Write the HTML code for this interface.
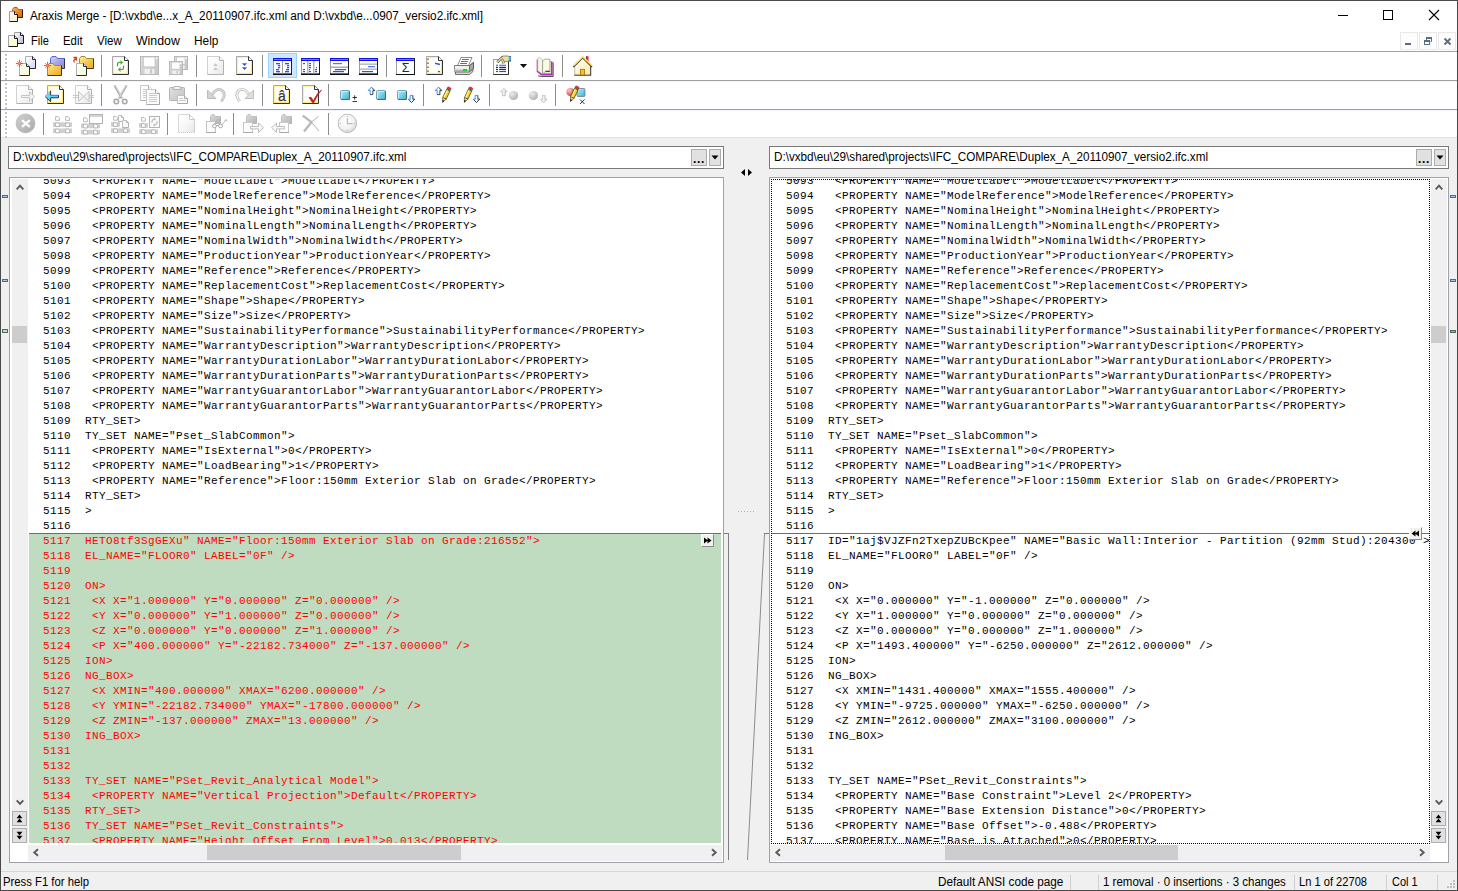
<!DOCTYPE html>
<html lang="en"><head><meta charset="utf-8"><title>Araxis Merge</title>
<style>
html,body{margin:0;padding:0;background:#fff;overflow:hidden}
#win{position:relative;width:1458px;height:891px;background:#f0f0f0;overflow:hidden;font-family:"Liberation Sans",sans-serif;font-size:12px;color:#000}
.abs{position:absolute}
.t{position:absolute;white-space:pre;font:12px/14px "Liberation Sans",sans-serif;transform-origin:0 0;color:#000}
#titlebar{position:absolute;left:0;top:0;width:1458px;height:31px;background:#fff}
#menubar{position:absolute;left:0;top:31px;width:1458px;height:20px;background:#fff}
#menubar .t{top:3px !important}
.mdib{position:absolute;top:1px;width:16px;height:16px;border:1px solid #e9e9e9;background:#fdfdfd}
#menubar svg.abs{top:1px !important}
#toolbars{position:absolute;left:0;top:0;width:1458px;height:138px}
#toolbars:before{content:"";position:absolute;left:0;top:51px;width:1458px;height:87px;background:#fff}
.tbline{position:absolute;left:0;width:1458px;height:1px;background:#a0a0a0}
.tbline2{position:absolute;left:0;width:1458px;height:1px;background:#e3e3e3}
.grip{position:absolute;left:5px;width:2px;height:26px;background-image:linear-gradient(#c6c6c6 2px,transparent 2px);background-size:2px 4px}
.ic{position:absolute}
.tsep{position:absolute;width:1px;height:21px;background:#8d8d8d}
.pathf{position:absolute;top:146px;height:21px;border:1px solid #7a7a7a;background:#fff}
.pbtn{position:absolute;top:2px;height:15px;border:1px solid #adadad;background:#e1e1e1}
.pbtn svg{display:block}
.dots{position:absolute;left:1px;top:2px;font:bold 12px/14px "Liberation Sans",sans-serif;letter-spacing:0.67px}
.mk{position:absolute;width:4px;height:1px;border:1px solid #4d6a92;background:#a9c6ea}
.mk.g{border-color:#55695a;background:#c0dcc0}
.mk.g2{border-color:#55695a;background:#8fb08f}
.pane{position:absolute;top:177px;height:684px;border:1px solid #a0a0a8;background:#fff}
.vs{position:absolute;top:1px;width:16px;height:664px;background:#f0f0f0}
.hs{position:absolute;top:667px;height:16px;background:#f0f0f0}
.thumb{position:absolute;background:#cdcdcd}
.sbtn{position:absolute;left:0;width:13px;height:13px;border:1px solid #adadad;background:#e1e1e1}
.sbtn svg{display:block}
.code{position:absolute;overflow:hidden;background:#fff}
.lines{position:absolute;left:0;top:-5px;width:1200px;font:11px/15px "Liberation Mono",monospace;letter-spacing:0.4px;color:#000}
.ln{white-space:pre;height:15px;padding-left:56px;position:relative}
.ln .no{position:absolute;left:14px}
.ln.r{color:#f00}
.greenbg{position:absolute;left:0;top:354px;width:100%;height:400px;background:#c0dcc0;border-top:1px solid #6e6e6e}
.insline{position:absolute;left:0;top:354px;width:100%;height:1px;background:#6e6e6e}
.cbtn{position:absolute;width:11px;height:11px;background:#f0f0f0;border:1px solid;border-color:#fff #8a8a8a #8a8a8a #fff}
.cbtn svg{display:block}
.focus{position:absolute;left:1px;top:1px;width:657px;height:663px;border:1px dotted #000;pointer-events:none}
#status{position:absolute;left:0;top:871px;width:1458px;height:20px;background:#f0f0f0;border-top:1px solid #d7d7d7}
.ssep{position:absolute;top:3px;width:1px;height:16px;background:#d0d0d0}
.frame{position:absolute;left:0;top:0;width:1456px;height:889px;border:1px solid #4a4a4a;pointer-events:none}
.tbl3{position:absolute;left:0;width:1458px;height:1px;background:#f1f4fa}

</style></head>
<body>
<div id="win">
<div id="titlebar">
<div class="t " style="left:30px;top:9px;transform:scaleX(0.9791);">Araxis Merge - [D:\vxbd\e...x_A_20110907.ifc.xml and D:\vxbd\e...0907_versio2.ifc.xml]</div>
<svg class="abs" style="left:1330px;top:5px" width="120" height="22" viewBox="0 0 120 22">
<path d="M8 10.5h10" stroke="#000" stroke-width="1" fill="none"/>
<rect x="53.5" y="5.5" width="9" height="9" stroke="#000" stroke-width="1" fill="none"/>
<path d="M99 5l10 10M109 5l-10 10" stroke="#000" stroke-width="1.1" fill="none"/>
</svg>
</div>
<div id="menubar">
<div class="t " style="left:31px;top:34px;transform:scaleX(0.9202);">File</div>
<div class="t " style="left:63px;top:34px;transform:scaleX(0.9474);">Edit</div>
<div class="t " style="left:97px;top:34px;transform:scaleX(0.9614);">View</div>
<div class="t " style="left:136px;top:34px;transform:scaleX(1.0261);">Window</div>
<div class="t " style="left:194px;top:34px;transform:scaleX(0.9884);">Help</div>
<div class="mdib" style="left:1400px"></div><div class="mdib" style="left:1419px"></div><div class="mdib" style="left:1438px"></div>
<svg class="abs" style="left:1400px;top:32px" width="56" height="18" viewBox="0 0 56 18">
<rect x="5" y="11" width="6" height="2" fill="#5b6c83"/>
<path d="M26.5 8.5V5.5h5v4h-1" stroke="#5b6c83" fill="none"/><rect x="26" y="5" width="6" height="2" fill="#5b6c83"/>
<rect x="24.5" y="8.500" width="5" height="4" stroke="#5b6c83" fill="#fff"/><rect x="24" y="8" width="6" height="2" fill="#5b6c83"/>
<path d="M44.500 6.500l6 6M50.500 6.500l-6 6" stroke="#5b6c83" stroke-width="1.800" fill="none"/>
</svg>
</div>
<svg class="abs" style="left:0;top:0" width="30" height="51" viewBox="0 0 30 51"><defs>
<linearGradient id="gfo" x1="0" y1="0" x2="1" y2="1"><stop offset="0" stop-color="#f8b060"/><stop offset="0.5" stop-color="#f08820"/><stop offset="1" stop-color="#d06808"/></linearGradient>
<linearGradient id="gdoc3" x1="0" y1="0" x2="0" y2="1"><stop offset="0" stop-color="#f8f8f8"/><stop offset="1" stop-color="#fff0c8"/></linearGradient>
<linearGradient id="gdoc1b" x1="0" y1="0" x2="1" y2="1"><stop offset="0" stop-color="#ffffff"/><stop offset="1" stop-color="#b8b8d8"/></linearGradient>
<linearGradient id="gdoc2b" x1="0" y1="0" x2="0" y2="1"><stop offset="0" stop-color="#f8f8f8"/><stop offset="1" stop-color="#ffffc0"/></linearGradient>
</defs><path d="M12.5 17.5V9.5L14 7.5H17L18.5 9.5H22.5V17.5Z" fill="url(#gfo)"/><path d="M12.5 17.5V9.5L14 7.5H17L18.5 9.5H22.5" fill="none" stroke="#b06010"/><path d="M12.5 17.5H22.5V9.5" fill="none" stroke="#301808"/><path d="M9.5 11.5H14.5L17.5 14.5V21.5H9.5Z" fill="url(#gdoc3)"/><path d="M9.5 21.5V11.5H14.5" fill="none" stroke="#a0a0a0"/><path d="M9.5 21.5H17.5V14.5L14.5 11.5" fill="none" stroke="#181818"/><path d="M14.5 11.5V14.5H17.5" fill="#fff" stroke="#181818"/><path d="M14.5 32.5H20.5L23.5 35.5V43.5H14.5Z" fill="url(#gdoc1b)"/><path d="M14.5 43.5V32.5H20.5" fill="none" stroke="#a0a0a0"/><path d="M14.5 43.5H23.5V35.5L20.5 32.5" fill="none" stroke="#181818"/><path d="M20.5 32.5V35.5H23.5" fill="#fff" stroke="#181818"/><path d="M8.5 35.5H14.5L17.5 38.5V46.5H8.5Z" fill="url(#gdoc2b)"/><path d="M8.5 46.5V35.5H14.5" fill="none" stroke="#a0a0a0"/><path d="M8.5 46.5H17.5V38.5L14.5 35.5" fill="none" stroke="#181818"/><path d="M14.5 35.5V38.5H17.5" fill="#fff" stroke="#181818"/></svg>
<div id="toolbars">
<div class="tbline" style="top:51px"></div><div class="tbline" style="top:80px"></div><div class="tbline" style="top:109px"></div><div class="tbline2" style="top:137px"></div>
<div class="tbl3" style="top:81px"></div><div class="tbl3" style="top:110px"></div>
<div class="grip" style="top:54px"></div>
<div class="grip" style="top:83px"></div>
<div class="grip" style="top:112px"></div>
<svg class="abs" style="left:0;top:51px" width="620" height="87" viewBox="0 51 620 87"><defs>
<radialGradient id="gy" cx="0.45" cy="0.4" r="0.75"><stop offset="0" stop-color="#ffffff"/><stop offset="0.6" stop-color="#fffef6"/><stop offset="0.85" stop-color="#fff6c0"/><stop offset="1" stop-color="#ffe870"/></radialGradient>
<linearGradient id="gd" x1="0" y1="0" x2="1" y2="1"><stop offset="0" stop-color="#ffffff"/><stop offset="0.5" stop-color="#f8f8f8"/><stop offset="1" stop-color="#e6e6e6"/></linearGradient>
<linearGradient id="gdoc1" x1="0" y1="0" x2="1" y2="1"><stop offset="0" stop-color="#ffffff"/><stop offset="1" stop-color="#d4d4f4"/></linearGradient>
<linearGradient id="gdoc2" x1="0" y1="0" x2="1" y2="1"><stop offset="0" stop-color="#ffffff"/><stop offset="1" stop-color="#f4fbc8"/></linearGradient>
<linearGradient id="gfy" x1="0" y1="0" x2="1" y2="1"><stop offset="0" stop-color="#fff0a8"/><stop offset="0.5" stop-color="#f8c850"/><stop offset="1" stop-color="#e8a828"/></linearGradient>
<linearGradient id="gfb" x1="0" y1="0" x2="1" y2="1"><stop offset="0" stop-color="#d8d4f8"/><stop offset="0.5" stop-color="#a8a4e4"/><stop offset="1" stop-color="#7c8cd8"/></linearGradient>
<linearGradient id="gfg" x1="0" y1="0" x2="1" y2="1"><stop offset="0" stop-color="#dcdcdc"/><stop offset="1" stop-color="#b4b4b4"/></linearGradient>
<linearGradient id="gsq" x1="0" y1="0" x2="1" y2="1"><stop offset="0" stop-color="#b8f0fc"/><stop offset="0.5" stop-color="#78d0e8"/><stop offset="1" stop-color="#48a8c8"/></linearGradient>
<radialGradient id="gball" cx="0.35" cy="0.3" r="0.8"><stop offset="0" stop-color="#ececec"/><stop offset="1" stop-color="#acacac"/></radialGradient>
<radialGradient id="grball" cx="0.35" cy="0.3" r="0.8"><stop offset="0" stop-color="#ffc8c8"/><stop offset="1" stop-color="#d83030"/></radialGradient>
<radialGradient id="gclock" cx="0.4" cy="0.35" r="0.8"><stop offset="0" stop-color="#ffffff"/><stop offset="0.55" stop-color="#f2f2f2"/><stop offset="1" stop-color="#c6c6c6"/></radialGradient>
<linearGradient id="gfl" x1="0" y1="0" x2="1" y2="1"><stop offset="0" stop-color="#e0e0e0"/><stop offset="1" stop-color="#c4c4c4"/></linearGradient>
<linearGradient id="gar" x1="0" y1="0" x2="0" y2="1"><stop offset="0" stop-color="#c0f0ff"/><stop offset="1" stop-color="#38b8f8"/></linearGradient>
<linearGradient id="ghome" x1="0" y1="0" x2="1" y2="1"><stop offset="0" stop-color="#ffffff"/><stop offset="1" stop-color="#ffe9a0"/></linearGradient>
<linearGradient id="gar2" x1="0" y1="0" x2="0" y2="1"><stop offset="0" stop-color="#c0f0ff"/><stop offset="1" stop-color="#50c0ff"/></linearGradient>
<linearGradient id="gcx" x1="0" y1="0" x2="1" y2="1"><stop offset="0" stop-color="#d0d0d0"/><stop offset="1" stop-color="#aaaaaa"/></linearGradient>
<linearGradient id="gar3" x1="0" y1="0" x2="1" y2="0.5"><stop offset="0" stop-color="#e8fbff"/><stop offset="0.35" stop-color="#58d8ff"/><stop offset="1" stop-color="#58d0ff"/></linearGradient>
<linearGradient id="gar4" x1="0" y1="0" x2="1" y2="0"><stop offset="0" stop-color="#50c8ff"/><stop offset="0.5" stop-color="#e8fcff"/><stop offset="1" stop-color="#60d8ff"/></linearGradient>
</defs>
<path d="M25.5 56.5H32.5L35.5 59.5V68.5H25.5Z" fill="url(#gdoc1)"/><path d="M25.5 68.5V56.5H32.5" fill="none" stroke="#b0b0b0"/><path d="M25.5 68.5H35.5V59.5L32.5 56.5" fill="none" stroke="#282828"/><path d="M32.5 56.5V59.5H35.5" fill="#fff" stroke="#282828"/>
<path d="M19.5 63.5H26.5L29.5 66.5V75.5H19.5Z" fill="url(#gdoc2)"/><path d="M19.5 75.5V63.5H26.5" fill="none" stroke="#b0b0b0"/><path d="M19.5 75.5H29.5V66.5L26.5 63.5" fill="none" stroke="#282828"/><path d="M26.5 63.5V66.5H29.5" fill="#fff" stroke="#282828"/>
<path d="M21.1 63.5L23.1 63.5" stroke="#e85028" stroke-width="1"/><path d="M20.63 64.63L21.62 65.62" stroke="#e85028" stroke-width="1"/><path d="M19.5 65.1L19.5 67.1" stroke="#e85028" stroke-width="1"/><path d="M18.37 64.63L17.38 65.62" stroke="#e85028" stroke-width="1"/><path d="M17.9 63.5L15.9 63.5" stroke="#e85028" stroke-width="1"/><path d="M18.37 62.37L17.38 61.38" stroke="#e85028" stroke-width="1"/><path d="M19.5 61.9L19.5 59.9" stroke="#e85028" stroke-width="1"/><path d="M20.63 62.37L21.62 61.38" stroke="#e85028" stroke-width="1"/><circle cx="19.5" cy="63.5" r="1.3" fill="#c8a090" stroke="#e85028" stroke-width="0.8"/>
<path d="M50.5 68.5V58.5L52 56.5H56L57.5 58.5H64.5V68.5Z" fill="url(#gfb)"/><path d="M50.5 68.5V58.5L52 56.5H56L57.5 58.5H64.5" fill="none" stroke="#5068d0"/><path d="M50.5 68.5H64.5V58.5" fill="none" stroke="#303048"/>
<path d="M47.5 75.5V65.5L49 63.5H53L54.5 65.5H61.5V75.5Z" fill="url(#gfy)"/><path d="M47.5 75.5V65.5L49 63.5H53L54.5 65.5H61.5" fill="none" stroke="#a09030"/><path d="M47.5 75.5H61.5V65.5" fill="none" stroke="#403810"/>
<path d="M49.1 65.5L51.1 65.5" stroke="#e85028" stroke-width="1"/><path d="M48.63 66.63L49.62 67.62" stroke="#e85028" stroke-width="1"/><path d="M47.5 67.1L47.5 69.1" stroke="#e85028" stroke-width="1"/><path d="M46.37 66.63L45.38 67.62" stroke="#e85028" stroke-width="1"/><path d="M45.9 65.5L43.9 65.5" stroke="#e85028" stroke-width="1"/><path d="M46.37 64.37L45.38 63.38" stroke="#e85028" stroke-width="1"/><path d="M47.5 63.9L47.5 61.9" stroke="#e85028" stroke-width="1"/><path d="M48.63 64.37L49.62 63.38" stroke="#e85028" stroke-width="1"/><circle cx="47.5" cy="65.5" r="1.3" fill="#c8a090" stroke="#e85028" stroke-width="0.8"/>
<path d="M79.5 68.5V58.5L81 56.5H85L86.5 58.5H93.5V68.5Z" fill="url(#gfy)"/><path d="M79.5 68.5V58.5L81 56.5H85L86.5 58.5H93.5" fill="none" stroke="#a09030"/><path d="M79.5 68.5H93.5V58.5" fill="none" stroke="#403810"/>
<path d="M76.5 63.5H83.5L86.5 66.5V75.5H76.5Z" fill="url(#gdoc2)"/><path d="M76.5 75.5V63.5H83.5" fill="none" stroke="#b0b0b0"/><path d="M76.5 75.5H86.5V66.5L83.5 63.5" fill="none" stroke="#282828"/><path d="M83.5 63.5V66.5H86.5" fill="#fff" stroke="#282828"/>
<path d="M73.300 57.500h3.200v3.200M76.300 57.700l-3 3.200M73.800 61.200l0.700 1.200" stroke="#e04020" stroke-width="1.300" fill="none"/>
<rect x="101" y="55" width="1" height="22" fill="#8c8c8c"/>
<path d="M112.5 56.5H124.5L128.5 60.5V74.5H112.5Z" fill="url(#gy)"/><path d="M113.5 73.5V57.5H124" fill="none" stroke="#fff2a4" stroke-width="1"/><path d="M113.5 73.5H127.5V61.5" fill="none" stroke="#ffe978" stroke-width="1"/><path d="M112.5 74.5V56.5H124.5" fill="none" stroke="#a8a8a8"/><path d="M112.5 74.5H128.5V60.5L124.5 56.5" fill="none" stroke="#303038"/><path d="M124.5 56.5V60.5H128.5" fill="#fff" stroke="#303038"/>
<path d="M117.500 66.200v-2.200q0-1.500 1.500-1.500h2.500" fill="none" stroke="#208c94" stroke-width="1.100"/>
<path d="M118.800 62.400h3" stroke="#48b020" stroke-width="1.200"/><path d="M120.200 60l3 2.400-3 2.400 0.600-2.400z" fill="#48b020"/>
<path d="M123.500 65.800v2.200q0 1.500-1.500 1.500h-2.500" fill="none" stroke="#208c94" stroke-width="1.100"/>
<path d="M122.200 69.500h-3" stroke="#48b020" stroke-width="1.200"/><path d="M120.800 67.100l-3 2.400 3 2.400-0.600-2.400z" fill="#48b020"/>
<rect x="140.5" y="56.5" width="18" height="18" fill="url(#gfl)" stroke="#b8b8b8"/><rect x="143.31" y="57" width="11.78" height="9.88" fill="#fdfdfd" stroke="#c0c0c0" stroke-width="0.8"/><rect x="144.56" y="68.92" width="9.88" height="5.08" fill="#f0f0f0"/><rect x="149.99" y="69.3" width="2.17" height="4.2" fill="#c8c8c8"/><rect x="156" y="57.5" width="1.5" height="1.5" fill="#fff"/>
<rect x="174.5" y="56.5" width="13" height="13" fill="url(#gfl)" stroke="#b8b8b8"/><rect x="176.36" y="57" width="8.68" height="7.28" fill="#fdfdfd" stroke="#c0c0c0" stroke-width="0.8"/><rect x="177.36" y="65.52" width="7.28" height="3.48" fill="#f0f0f0"/><rect x="181.36" y="65.8" width="1.6" height="2.7" fill="#c8c8c8"/><rect x="185" y="57.5" width="1.5" height="1.5" fill="#fff"/>
<rect x="169.5" y="61.5" width="13" height="13" fill="url(#gfl)" stroke="#b8b8b8"/><rect x="171.36" y="62" width="8.68" height="7.28" fill="#fdfdfd" stroke="#c0c0c0" stroke-width="0.8"/><rect x="172.36" y="70.52" width="7.28" height="3.48" fill="#f0f0f0"/><rect x="176.36" y="70.8" width="1.6" height="2.7" fill="#c8c8c8"/><rect x="180" y="62.5" width="1.5" height="1.5" fill="#fff"/>
<rect x="196" y="55" width="1" height="22" fill="#8c8c8c"/>
<path d="M207.5 56.5H219.5L223.5 60.5V74.5H207.5Z" fill="url(#gd)"/><path d="M207.5 74.5V56.5H219.5" fill="none" stroke="#d0d0d0"/><path d="M207.5 74.5H223.5V60.5L219.5 56.5" fill="none" stroke="#b0b0b0"/><path d="M219.5 56.5V60.5H223.5" fill="#fafafa" stroke="#b0b0b0"/>
<path d="M215.500 63.200l2.500 2.700h-5zM215.500 67.300l2.500 2.700h-5z" fill="#c8c8c8"/>
<path d="M236.5 56.5H248.5L252.5 60.5V74.5H236.5Z" fill="url(#gy)"/><path d="M237.5 73.5V57.5H248" fill="none" stroke="#fff2a4" stroke-width="1"/><path d="M237.5 73.5H251.5V61.5" fill="none" stroke="#ffe978" stroke-width="1"/><path d="M236.5 74.5V56.5H248.5" fill="none" stroke="#a8a8a8"/><path d="M236.5 74.5H252.5V60.5L248.5 56.5" fill="none" stroke="#303038"/><path d="M248.5 56.5V60.5H252.5" fill="#fff" stroke="#303038"/>
<path d="M242 63.200h5l-2.500 2.700zM242 67.300h5l-2.500 2.700z" fill="#3050e0"/><path d="M242 63.500h5M242 67.600h5" stroke="#7090ff" stroke-width="0.7"/>
<rect x="262" y="55" width="1" height="22" fill="#8c8c8c"/>
<rect x="268.500" y="53.500" width="28" height="24" fill="#cce8ff" stroke="#99d1ff"/>
<rect x="273" y="58" width="19" height="17" fill="#fff"/><rect x="273" y="58" width="19" height="3" fill="#1010e8"/><rect x="274" y="59" width="17" height="1" fill="#6c8cf8"/><rect x="273" y="61" width="1" height="14" fill="#9c9c9c"/><rect x="291" y="58" width="1" height="17" fill="#202020"/><rect x="273" y="73.4" width="19" height="1.6" fill="#101010"/>
<rect x="282" y="61" width="1" height="12.500" fill="#9c9c9c"/>
<rect x="276" y="63.1" width="4" height="1.2" fill="#1c3cf0"/>
<rect x="278" y="65.1" width="2.2" height="1.2" fill="#1c3cf0"/>
<rect x="278" y="67.1" width="2.2" height="1.2" fill="#1c3cf0"/>
<rect x="276" y="69.1" width="3" height="1.2" fill="#1c3cf0"/>
<rect x="276" y="71.1" width="4" height="1.2" fill="#1c3cf0"/>
<rect x="285" y="63.1" width="4" height="1.2" fill="#1c3cf0"/>
<rect x="287" y="65.1" width="2.2" height="1.2" fill="#1c3cf0"/>
<rect x="287" y="67.1" width="2.2" height="1.2" fill="#1c3cf0"/>
<rect x="286" y="69.1" width="3" height="1.2" fill="#1c3cf0"/>
<rect x="285" y="71.1" width="4" height="1.2" fill="#1c3cf0"/>
<rect x="301" y="58" width="19" height="17" fill="#fff"/><rect x="301" y="58" width="19" height="3" fill="#1010e8"/><rect x="302" y="59" width="17" height="1" fill="#6c8cf8"/><rect x="301" y="61" width="1" height="14" fill="#9c9c9c"/><rect x="319" y="58" width="1" height="17" fill="#202020"/><rect x="301" y="73.4" width="19" height="1.6" fill="#101010"/>
<rect x="307" y="61" width="1.500" height="12.500" fill="#b4b4b4"/><rect x="313" y="61" width="1.500" height="12.500" fill="#b4b4b4"/>
<rect x="303" y="63" width="2" height="1.2" fill="#3050f0"/>
<rect x="303" y="69" width="2" height="1.2" fill="#3050f0"/>
<rect x="303" y="71" width="2" height="1.2" fill="#3050f0"/>
<rect x="309" y="63" width="2" height="1.2" fill="#3050f0"/>
<rect x="309" y="65" width="2" height="1.2" fill="#3050f0"/>
<rect x="309" y="67" width="2" height="1.2" fill="#3050f0"/>
<rect x="309" y="69" width="1" height="1.2" fill="#3050f0"/>
<rect x="309" y="71" width="2" height="1.2" fill="#3050f0"/>
<rect x="316" y="67" width="1" height="1.2" fill="#3050f0"/>
<rect x="315" y="69" width="2" height="1.2" fill="#3050f0"/>
<rect x="315" y="71" width="2" height="1.2" fill="#3050f0"/>
<rect x="330" y="58" width="19" height="17" fill="#fff"/><rect x="330" y="58" width="19" height="3" fill="#1010e8"/><rect x="331" y="59" width="17" height="1" fill="#6c8cf8"/><rect x="330" y="61" width="1" height="14" fill="#9c9c9c"/><rect x="348" y="58" width="1" height="17" fill="#202020"/><rect x="330" y="73.4" width="19" height="1.6" fill="#101010"/>
<rect x="331" y="66.500" width="17" height="1.500" fill="#a8a8a8"/>
<rect x="333" y="63" width="9" height="1.2" fill="#5078f0"/>
<rect x="335" y="69" width="11" height="1.2" fill="#3050e0"/>
<rect x="333" y="71" width="11" height="1.2" fill="#3050e0"/>
<rect x="359" y="58" width="19" height="17" fill="#fff"/><rect x="359" y="58" width="19" height="3" fill="#1010e8"/><rect x="360" y="59" width="17" height="1" fill="#6c8cf8"/><rect x="359" y="61" width="1" height="14" fill="#9c9c9c"/><rect x="377" y="58" width="1" height="17" fill="#202020"/><rect x="359" y="73.4" width="19" height="1.6" fill="#101010"/>
<rect x="360" y="63.500" width="17" height="1.300" fill="#b0b0b0"/><rect x="360" y="68.500" width="17" height="1.300" fill="#b0b0b0"/>
<rect x="368" y="66" width="7" height="1.2" fill="#5078f0"/>
<rect x="362" y="71" width="11" height="1.2" fill="#3050e0"/>
<rect x="386" y="55" width="1" height="22" fill="#8c8c8c"/>
<rect x="396" y="58" width="19" height="17" fill="#fff"/><rect x="396" y="58" width="19" height="3" fill="#1010e8"/><rect x="397" y="59" width="17" height="1" fill="#6c8cf8"/><rect x="396" y="61" width="1" height="14" fill="#9c9c9c"/><rect x="414" y="58" width="1" height="17" fill="#202020"/><rect x="396" y="74" width="19" height="1" fill="#101010"/>
<text x="405.500" y="72.300" font-family="Liberation Sans, sans-serif" font-size="12.500" text-anchor="middle" fill="#282828">Σ</text>
<path d="M426.5 56.5H438.5L442.5 60.5V74.5H426.5Z" fill="url(#gy)"/><path d="M427.5 73.5V57.5H438" fill="none" stroke="#fff2a4" stroke-width="1"/><path d="M427.5 73.5H441.5V61.5" fill="none" stroke="#ffe978" stroke-width="1"/><path d="M426.5 74.5V56.5H438.5" fill="none" stroke="#a8a8a8"/><path d="M426.5 74.5H442.5V60.5L438.5 56.5" fill="none" stroke="#303038"/><path d="M438.5 56.5V60.5H442.5" fill="#fff" stroke="#303038"/>
<rect x="427" y="58.5" width="2" height="1.500" fill="#c88818"/>
<rect x="427" y="62.5" width="2" height="1.500" fill="#c88818"/>
<rect x="427" y="66.5" width="2" height="1.500" fill="#c88818"/>
<rect x="427" y="70.5" width="2" height="1.500" fill="#c88818"/>
<path d="M435 63.300l5 1.200" stroke="#3858e8" stroke-width="1.600"/><rect x="438" y="71" width="2" height="1.200" fill="#3858e8"/>
<path d="M457.500 65.500l3.500-8h11l-3.500 8z" fill="#fff" stroke="#707070" stroke-width="0.8"/>
<path d="M462 59.500h7M461 61.500h7M460 63.500h7" stroke="#4070e8" stroke-width="1"/>
<path d="M454.500 65.500h15l4-3v6l-4 3.500h-15z" fill="#f0f0f0" stroke="#606060" stroke-width="0.8"/>
<path d="M469.500 65.500l4-3v6l-4 3.500z" fill="#a8a8a8" stroke="#505050" stroke-width="0.8"/>
<path d="M455.500 72h14l3.500-3v2.500l-3.500 3h-14z" fill="#d8d8d8" stroke="#505050" stroke-width="0.8"/>
<rect x="454" y="69.500" width="15.500" height="2" fill="#b8b8b8"/>
<rect x="463" y="69" width="4" height="2" fill="#20d020"/>
<rect x="481" y="55" width="1" height="22" fill="#8c8c8c"/>
<rect x="493.500" y="59.500" width="15" height="15" fill="#fffff4" stroke="#a0a0a0"/><path d="M493.500 74.500h15v-15" fill="none" stroke="#303030"/>
<rect x="496" y="64.7" width="2" height="1.200" fill="#4878f8"/><rect x="499.200" y="64.7" width="6.800" height="1.200" fill="#4878f8"/>
<rect x="496" y="66.8" width="2" height="1.200" fill="#1818f0"/><rect x="499.200" y="66.8" width="6.800" height="1.200" fill="#1818f0"/>
<rect x="496" y="68.8" width="2" height="1.200" fill="#1818f0"/><rect x="499.200" y="68.8" width="6.800" height="1.200" fill="#1818f0"/>
<rect x="496" y="70.9" width="2" height="1.200" fill="#2050b0"/><rect x="499.200" y="70.9" width="6.800" height="1.200" fill="#2050b0"/>
<path d="M497.300 62.300l4.400-4.600 2 5.600" fill="none" stroke="#504c20" stroke-width="2.400" stroke-linejoin="miter"/>
<path d="M497.300 62.300l4.400-4.600 2 5.600" fill="none" stroke="#f0ecc0" stroke-width="1.200" stroke-linejoin="miter"/>
<path d="M501.500 57.500l1.500-1.500h5.500l0.800 1v4l-4.500 0.800z" fill="#e4e0b4" stroke="#807840" stroke-width="0.8"/>
<rect x="509.200" y="56" width="1.800" height="5.200" fill="#30b0ff"/><rect x="509.200" y="56" width="1.800" height="1" fill="#4060f0"/><rect x="509.200" y="60.400" width="1.800" height="1" fill="#303060"/>
<path d="M519.900 64h7.200l-3.600 4z" fill="#101010"/>
<path d="M538.200 75.900l3.200 0.500h11.700v-14" fill="none" stroke="#282828" stroke-width="0.9"/>
<path d="M536.700 59.500v12.300l4.500 3.700h11.300v-14h-2.500z" fill="#b428b4"/>
<path d="M538 60v11l3.700 2.600h9.300v-11.600z" fill="#ececdc"/>
<path d="M537.700 58.500l1.800-1.300 3 3v13.900l-4.800-3.400z" fill="#f8f8e0" stroke="#a8a8a8" stroke-width="0.7"/>
<path d="M542.600 60.500l2.800-1.300h4.500v12.200h-4.500l-2.800 2.600z" fill="#fbfbe4" stroke="#888" stroke-width="0.7"/>
<path d="M545.500 71.300h4.300" stroke="#303030" stroke-width="1.100"/>
<rect x="562" y="55" width="1" height="22" fill="#8c8c8c"/>
<rect x="586.200" y="56.200" width="2.400" height="6" fill="#f02860"/><rect x="586" y="56.200" width="0.800" height="5" fill="#802040"/>
<path d="M574.700 66.300l8-7.800 8 7.800v8.900h-16z" fill="url(#ghome)"/>
<path d="M574.700 66.300v8.900" stroke="#b8b090" stroke-width="0.8"/><path d="M574.300 75.200h16.800M590.700 66.300v9" fill="none" stroke="#303030" stroke-width="1"/>
<path d="M573.400 66.900l9.300-9.100 9.300 9.100" fill="none" stroke="#303030" stroke-width="1.400"/>
<path d="M573.400 65.700l9.300-9.100 9.300 9.100" fill="none" stroke="#ffe040" stroke-width="1.700"/>
<path d="M574 65l8.700-8.500" fill="none" stroke="#fff8c0" stroke-width="0.600"/>
<rect x="580.500" y="69.300" width="4" height="5.700" fill="#f8c020" stroke="#a07010" stroke-width="0.8"/>
<path d="M16.5 85.5H28.5L32.5 89.5V103.5H16.5Z" fill="url(#gd)"/><path d="M16.5 103.5V85.5H28.5" fill="none" stroke="#d0d0d0"/><path d="M16.5 103.5H32.5V89.5L28.5 85.5" fill="none" stroke="#b0b0b0"/><path d="M28.5 85.5V89.5H32.5" fill="#fafafa" stroke="#b0b0b0"/>
<path d="M21.500 95.500h8v-3.500l5 4.500-5 4.500v-3.500h-8z" fill="#f4f4f4" stroke="#c0c0c0" stroke-width="0.9"/>
<path d="M47.5 85.5H59.5L63.5 89.5V103.5H47.5Z" fill="url(#gy)"/><path d="M48.5 102.5V86.5H59" fill="none" stroke="#fff2a4" stroke-width="1"/><path d="M48.5 102.5H62.5V90.5" fill="none" stroke="#ffe978" stroke-width="1"/><path d="M47.5 103.5V85.5H59.5" fill="none" stroke="#a8a8a8"/><path d="M47.5 103.5H63.5V89.5L59.5 85.5" fill="none" stroke="#303038"/><path d="M59.5 85.5V89.5H63.5" fill="#fff" stroke="#303038"/>
<path d="M45 96.400L50.600 91V95.300H58.600V97.700H50.600V101.600Z" fill="url(#gar3)"/>
<path d="M45 96.400L50.600 91" stroke="#4070ff" stroke-width="0.9" stroke-dasharray="1.100 0.700" fill="none"/><path d="M50.600 95.300H58.400" stroke="#4060f0" stroke-width="0.9" fill="none"/>
<path d="M45.400 96.900L50.600 101.600V97.800H58.500V95.200M50.600 90.800V95.300" stroke="#202020" stroke-width="0.9" fill="none"/>
<path d="M75.5 85.5H87.5L91.5 89.5V103.5H75.5Z" fill="url(#gd)"/><path d="M75.5 103.5V85.5H87.5" fill="none" stroke="#d0d0d0"/><path d="M75.5 103.5H91.5V89.5L87.5 85.5" fill="none" stroke="#b0b0b0"/><path d="M87.5 85.5V89.5H91.5" fill="#fafafa" stroke="#b0b0b0"/>
<path d="M73 95.500h5M89 95.500h5M73 97.500h5M89 97.500h5" stroke="#c8c8c8" stroke-width="1"/><path d="M78.500 91.500l10.500 10v-10l-10.500 10z" fill="#f0f0f0" stroke="#c0c0c0" stroke-width="0.9"/>
<rect x="101" y="84" width="1" height="22" fill="#8c8c8c"/>
<path d="M114.500 85.500l7.500 13M126.500 85.500l-7.500 13" stroke="#a8a8a8" stroke-width="2.100" fill="none"/><path d="M115 85.500l7 12.500M126 85.500l-7 12.500" stroke="#f0f0f0" stroke-width="0.600" fill="none"/>
<circle cx="116.300" cy="101.500" r="2.300" fill="#f4f4f4" stroke="#a8a8a8" stroke-width="1.500"/><circle cx="124.700" cy="101.500" r="2.300" fill="#f4f4f4" stroke="#a8a8a8" stroke-width="1.500"/>
<path d="M140.5 85.5H148.5L152.5 89.5V100.5H140.5Z" fill="#fcfcfc"/><path d="M140.5 100.5V85.5H148.5" fill="none" stroke="#c8c8c8"/><path d="M140.5 100.5H152.5V89.5L148.5 85.5" fill="none" stroke="#b0b0b0"/><path d="M148.5 85.5V89.5H152.5" fill="#fff" stroke="#b0b0b0"/>
<path d="M143 89.5h4" stroke="#c8c8c8" stroke-width="0.9"/>
<path d="M143 91.5h4" stroke="#c8c8c8" stroke-width="0.9"/>
<path d="M143 93.5h4" stroke="#c8c8c8" stroke-width="0.9"/>
<path d="M143 95.5h4" stroke="#c8c8c8" stroke-width="0.9"/>
<path d="M143 97.5h4" stroke="#c8c8c8" stroke-width="0.9"/>
<path d="M146.5 89.5H155.5L159.5 93.5V104.5H146.5Z" fill="#fcfcfc"/><path d="M146.5 104.5V89.5H155.5" fill="none" stroke="#c8c8c8"/><path d="M146.5 104.5H159.5V93.5L155.5 89.5" fill="none" stroke="#a8a8a8"/><path d="M155.5 89.5V93.5H159.5" fill="#fff" stroke="#a8a8a8"/>
<path d="M149 93.5h8" stroke="#c4c4c4" stroke-width="0.9"/>
<path d="M149 95.5h8" stroke="#c4c4c4" stroke-width="0.9"/>
<path d="M149 97.5h8" stroke="#c4c4c4" stroke-width="0.9"/>
<path d="M149 99.5h8" stroke="#c4c4c4" stroke-width="0.9"/>
<path d="M149 101.5h8" stroke="#c4c4c4" stroke-width="0.9"/>
<rect x="169.500" y="87.500" width="15" height="13" rx="1" fill="url(#gfl)" stroke="#b4b4b4"/>
<path d="M172.500 89.500l1.500-3h6l1.500 3z" fill="#e8e8e8" stroke="#b0b0b0" stroke-width="0.9"/><rect x="175.500" y="87.400" width="3" height="1" fill="#fff"/>
<path d="M177.5 95.5H184.5L187.5 98.5V103.5H177.5Z" fill="#fcfcfc"/><path d="M177.5 103.5V95.5H184.5" fill="none" stroke="#c0c0c0"/><path d="M177.5 103.5H187.5V98.5L184.5 95.5" fill="none" stroke="#a8a8a8"/><path d="M184.5 95.5V98.5H187.5" fill="#fff" stroke="#a8a8a8"/>
<path d="M179 98.500h4M179 100.500h7" stroke="#c4c4c4" stroke-width="0.9"/>
<rect x="196" y="84" width="1" height="22" fill="#8c8c8c"/>
<path d="M212.300 94.300C214.500 89.800 219.500 88 222.300 90.600C225.600 93.600 224 98 221.300 101.500" fill="none" stroke="#b4b4b4" stroke-width="2.800"/>
<path d="M212.300 94.300C214.500 89.800 219.500 88 222.300 90.600C225.600 93.600 224 98 221.300 101.500" fill="none" stroke="#dadada" stroke-width="1.500"/>
<path d="M207.500 90v8.500h8.500z" fill="#d4d4d4" stroke="#b8b8b8" stroke-width="0.9"/>
<path d="M248.700 94.300C246.500 89.800 241.500 88 238.700 90.600C235.400 93.600 237 98 239.700 101.500" fill="none" stroke="#b4b4b4" stroke-width="2.800"/>
<path d="M248.700 94.300C246.500 89.800 241.500 88 238.700 90.600C235.400 93.600 237 98 239.700 101.500" fill="none" stroke="#f2f2f2" stroke-width="1.500"/>
<path d="M253.500 90v8.500h-8.500z" fill="#e0e0e0" stroke="#b8b8b8" stroke-width="0.9"/>
<rect x="262" y="84" width="1" height="22" fill="#8c8c8c"/>
<path d="M273.5 85.5H285.5L289.5 89.5V103.5H273.5Z" fill="url(#gy)"/><path d="M274.5 102.5V86.5H285" fill="none" stroke="#fff2a4" stroke-width="1"/><path d="M274.5 102.5H288.5V90.5" fill="none" stroke="#ffe978" stroke-width="1"/><path d="M273.5 103.5V85.5H285.5" fill="none" stroke="#a8a8a8"/><path d="M273.5 103.5H289.5V89.5L285.5 85.5" fill="none" stroke="#303038"/><path d="M285.5 85.5V89.5H289.5" fill="#fff" stroke="#303038"/>
<text x="281.800" y="100.900" font-family="Liberation Sans, sans-serif" font-size="14" text-anchor="middle" fill="#383838" stroke="#383838" stroke-width="0.250">â</text>
<path d="M302.5 85.5H314.5L318.5 89.5V103.5H302.5Z" fill="url(#gy)"/><path d="M303.5 102.5V86.5H314" fill="none" stroke="#fff2a4" stroke-width="1"/><path d="M303.5 102.5H317.5V90.5" fill="none" stroke="#ffe978" stroke-width="1"/><path d="M302.5 103.5V85.5H314.5" fill="none" stroke="#a8a8a8"/><path d="M302.5 103.5H318.5V89.5L314.5 85.5" fill="none" stroke="#303038"/><path d="M314.5 85.5V89.5H318.5" fill="#fff" stroke="#303038"/>
<path d="M309 97.500l2.300 0 2 3.500c2-4.500 4.800-8.500 8.300-11-3 3.500-5.800 8-7.700 12.500l-1.500 0z" fill="#c01828" stroke="#c01828" stroke-width="0.7" stroke-linejoin="round"/>
<rect x="328" y="84" width="1" height="22" fill="#8c8c8c"/>
<rect x="340.5" y="90.5" width="9" height="9" rx="1.200" fill="url(#gsq)" stroke="#6c98a8" stroke-width="0.9"/><path d="M341.5 98V91.5H348" fill="none" stroke="#c4f4ff" stroke-width="0.9"/><path d="M341.3 99.5H349.5V91.3" fill="none" stroke="#3c6474" stroke-width="0.9"/>
<path d="M352.500 97.500h4.500M354.700 95.300v4.400M352.500 101.500h4.500" stroke="#202020" stroke-width="0.9"/>
<g transform="translate(368 86.9)"><path d="M3.500 0L7 3.700H4.900V7.800H2.100V3.700H0Z" fill="url(#gar4)"/><path d="M3.500 0.200L0.200 3.700H2.100V7.600" fill="none" stroke="#4878ff" stroke-width="0.8"/><path d="M3.700 0.400L6.800 3.700H4.900V7.700H2.100" fill="none" stroke="#202020" stroke-width="0.8"/></g>
<rect x="376.5" y="90.5" width="9" height="9" rx="1.200" fill="url(#gsq)" stroke="#6c98a8" stroke-width="0.9"/><path d="M377.5 98V91.5H384" fill="none" stroke="#c4f4ff" stroke-width="0.9"/><path d="M377.3 99.5H385.5V91.3" fill="none" stroke="#3c6474" stroke-width="0.9"/>
<rect x="397.5" y="90.5" width="9" height="9" rx="1.200" fill="url(#gsq)" stroke="#6c98a8" stroke-width="0.9"/><path d="M398.5 98V91.5H405" fill="none" stroke="#c4f4ff" stroke-width="0.9"/><path d="M398.3 99.5H406.5V91.3" fill="none" stroke="#3c6474" stroke-width="0.9"/>
<g transform="translate(408 95.2)"><path d="M2.100 0H4.900V3.900H7L3.500 7.600L0 3.900H2.100Z" fill="url(#gar4)"/><path d="M4.900 0.200H2.100V3.900H0.200L1.300 5.100" fill="none" stroke="#4878ff" stroke-width="0.8"/><path d="M4.900 0.200V3.900H6.800L3.500 7.400L1.200 5" fill="none" stroke="#202020" stroke-width="0.8"/></g>
<rect x="423" y="84" width="1" height="22" fill="#8c8c8c"/>
<g transform="translate(435 86.9)"><path d="M3.500 0L7 3.700H4.900V7.800H2.100V3.700H0Z" fill="url(#gar4)"/><path d="M3.500 0.200L0.200 3.700H2.100V7.600" fill="none" stroke="#4878ff" stroke-width="0.8"/><path d="M3.700 0.400L6.800 3.700H4.900V7.700H2.100" fill="none" stroke="#202020" stroke-width="0.8"/></g>
<polygon points="442.78,97.52 446.53,89.5 449.97,91.1 446.22,99.13" fill="#f8d020" stroke="#403000" stroke-width="0.7"/><polygon points="443.23,97.73 446.98,89.71 447.97,90.17 444.23,98.2" fill="#fff8a0"/><polygon points="442.6,102.4 442.78,97.52 446.22,99.13" fill="#f0d8b0" stroke="#403000" stroke-width="0.6"/><polygon points="442.6,102.4 442.67,100 444.39,100.81" fill="#101010"/><polygon points="446.53,89.5 447.03,88.41 450.48,90.02 449.97,91.1" fill="#30c030" stroke="#206020" stroke-width="0.4"/><polygon points="447.03,88.41 447.62,87.14 448.6,86.93 450.6,87.87 451.07,88.75 450.48,90.02" fill="#f02868" stroke="#901030" stroke-width="0.5"/>
<polygon points="464.48,97.52 468.23,89.5 471.67,91.1 467.92,99.13" fill="#f8d020" stroke="#403000" stroke-width="0.7"/><polygon points="464.93,97.73 468.68,89.71 469.67,90.17 465.93,98.2" fill="#fff8a0"/><polygon points="464.3,102.4 464.48,97.52 467.92,99.13" fill="#f0d8b0" stroke="#403000" stroke-width="0.6"/><polygon points="464.3,102.4 464.37,100 466.09,100.81" fill="#101010"/><polygon points="468.23,89.5 468.73,88.41 472.18,90.02 471.67,91.1" fill="#30c030" stroke="#206020" stroke-width="0.4"/><polygon points="468.73,88.41 469.32,87.14 470.3,86.93 472.3,87.87 472.77,88.75 472.18,90.02" fill="#f02868" stroke="#901030" stroke-width="0.5"/>
<g transform="translate(473 95.2)"><path d="M2.100 0H4.900V3.900H7L3.500 7.600L0 3.900H2.100Z" fill="url(#gar4)"/><path d="M4.900 0.200H2.100V3.900H0.200L1.300 5.100" fill="none" stroke="#4878ff" stroke-width="0.8"/><path d="M4.900 0.200V3.900H6.800L3.500 7.400L1.200 5" fill="none" stroke="#202020" stroke-width="0.8"/></g>
<rect x="489" y="84" width="1" height="22" fill="#8c8c8c"/>
<g transform="translate(500.3 88)"><path d="M3.500 0L7 3.700H4.900V7.800H2.100V3.700H0Z" fill="#f0f0f0"/><path d="M3.500 0.200L0.200 3.700H2.100V7.600" fill="none" stroke="#c4c4c4" stroke-width="0.8"/><path d="M3.700 0.400L6.800 3.700H4.900V7.700H2.100" fill="none" stroke="#b0b0b0" stroke-width="0.8"/></g>
<circle cx="513.500" cy="95.500" r="4.600" fill="url(#gball)"/>
<circle cx="533.400" cy="95.500" r="4.600" fill="url(#gball)"/>
<g transform="translate(540.2 95.3)"><path d="M2.100 0H4.900V3.900H7L3.500 7.600L0 3.900H2.100Z" fill="#f0f0f0"/><path d="M4.900 0.200H2.100V3.900H0.200L1.300 5.100" fill="none" stroke="#c4c4c4" stroke-width="0.8"/><path d="M4.900 0.200V3.900H6.800L3.500 7.400L1.200 5" fill="none" stroke="#b0b0b0" stroke-width="0.8"/></g>
<rect x="555" y="84" width="1" height="22" fill="#8c8c8c"/>
<circle cx="570.500" cy="92" r="4" fill="url(#grball)"/>
<rect x="577" y="88.500" width="8" height="8" rx="1" fill="url(#gsq)" stroke="#587888" stroke-width="0.7"/>
<polygon points="570.61,96.72 574.51,88.48 577.95,90.11 574.04,98.35" fill="#f8d020" stroke="#403000" stroke-width="0.7"/><polygon points="571.06,96.93 574.96,88.69 575.96,89.16 572.06,97.4" fill="#fff8a0"/><polygon points="570.4,101.6 570.61,96.72 574.04,98.35" fill="#f0d8b0" stroke="#403000" stroke-width="0.6"/><polygon points="570.4,101.6 570.48,99.21 572.2,100.02" fill="#101010"/><polygon points="574.51,88.48 575.03,87.39 578.46,89.02 577.95,90.11" fill="#30c030" stroke="#206020" stroke-width="0.4"/><polygon points="575.03,87.39 575.63,86.13 576.61,85.93 578.59,86.87 579.06,87.76 578.46,89.02" fill="#f02868" stroke="#901030" stroke-width="0.5"/>
<path d="M580 99.500l4.500 4.500M584.500 99.500l-4.500 4.500" stroke="#202020" stroke-width="0.9"/>
<circle cx="25.500" cy="123.400" r="9.500" fill="url(#gcx)" stroke="#b0b0b0" stroke-width="0.600"/><path d="M22 120.100l7.800 6.800M29.800 120.100l-7.800 6.800" stroke="#fff" stroke-width="2.400"/>
<rect x="43" y="113" width="1" height="22" fill="#8c8c8c"/>
<path d="M55.6 116.6h2.400l1.400 1.400v2.400h-3.800z" fill="#fff" stroke="#a8a8a8" stroke-width="0.8"/><path d="M65.7 116.6h2.400l1.400 1.400v2.400h-3.800z" fill="#fff" stroke="#a8a8a8" stroke-width="0.8"/><rect x="53" y="122.3" width="19" height="4.600" fill="#d0d0d0"/><path d="M55.6 122.8h2.400l1.400 1.400v2.400h-3.800z" fill="#fff" stroke="#a8a8a8" stroke-width="0.8"/><path d="M65.7 122.8h2.400l1.400 1.400v2.400h-3.800z" fill="#fff" stroke="#a8a8a8" stroke-width="0.8"/><rect x="53" y="128.5" width="19" height="4.600" fill="#d0d0d0"/><path d="M55.6 129h2.400l1.400 1.400v2.400h-3.800z" fill="#fff" stroke="#a8a8a8" stroke-width="0.8"/><path d="M65.7 129h2.400l1.400 1.400v2.400h-3.800z" fill="#fff" stroke="#a8a8a8" stroke-width="0.8"/>
<path d="M83.6 117.9h2.400l1.400 1.400v2.400h-3.800z" fill="#fff" stroke="#a8a8a8" stroke-width="0.8"/><rect x="81" y="123.6" width="19" height="4.600" fill="#d0d0d0"/><path d="M83.6 124.1h2.400l1.400 1.400v2.400h-3.800z" fill="#fff" stroke="#a8a8a8" stroke-width="0.8"/><path d="M93.7 124.1h2.400l1.400 1.400v2.400h-3.800z" fill="#fff" stroke="#a8a8a8" stroke-width="0.8"/><rect x="81" y="129.8" width="19" height="4.600" fill="#d0d0d0"/><path d="M83.6 130.3h2.400l1.400 1.400v2.400h-3.800z" fill="#fff" stroke="#a8a8a8" stroke-width="0.8"/><path d="M93.7 130.3h2.400l1.400 1.400v2.400h-3.800z" fill="#fff" stroke="#a8a8a8" stroke-width="0.8"/>
<rect x="89.500" y="114.500" width="13" height="9" fill="#fdfdfd" stroke="#b4b4b4"/><rect x="90" y="115" width="12" height="2" fill="#d4d4d4"/>
<path d="M113.6 116.4h2.400l1.400 1.400v2.400h-3.800z" fill="#fff" stroke="#a8a8a8" stroke-width="0.8"/><rect x="111" y="122.1" width="9" height="4.600" fill="#d0d0d0"/><path d="M113.6 122.6h2.400l1.400 1.400v2.400h-3.800z" fill="#fff" stroke="#a8a8a8" stroke-width="0.8"/><rect x="111" y="128.3" width="19" height="4.600" fill="#d0d0d0"/><path d="M113.6 128.8h2.400l1.400 1.400v2.400h-3.800z" fill="#fff" stroke="#a8a8a8" stroke-width="0.8"/><path d="M123.7 128.8h2.400l1.400 1.400v2.400h-3.800z" fill="#fff" stroke="#a8a8a8" stroke-width="0.8"/>
<path d="M118.5 115.5H121.5L123.5 117.5V121.5H118.5Z" fill="#fafafa"/><path d="M118.5 121.5V115.5H121.5" fill="none" stroke="#c0c0c0"/><path d="M118.5 121.5H123.5V117.5L121.5 115.5" fill="none" stroke="#b0b0b0"/><path d="M121.5 115.5V117.5H123.5" fill="#fff" stroke="#b0b0b0"/>
<path d="M122.5 120.5H126.5L128.5 122.5V127.5H122.5Z" fill="#fafafa"/><path d="M122.5 127.5V120.5H126.5" fill="none" stroke="#c0c0c0"/><path d="M122.5 127.5H128.5V122.5L126.5 120.5" fill="none" stroke="#b0b0b0"/><path d="M126.5 120.5V122.5H128.5" fill="#fff" stroke="#b0b0b0"/>
<path d="M141.6 117.4h2.400l1.400 1.400v2.400h-3.800z" fill="#fff" stroke="#a8a8a8" stroke-width="0.8"/><rect x="139" y="123.1" width="9" height="4.600" fill="#d0d0d0"/><path d="M141.6 123.6h2.400l1.400 1.400v2.400h-3.800z" fill="#fff" stroke="#a8a8a8" stroke-width="0.8"/><rect x="139" y="129.3" width="19" height="4.600" fill="#d0d0d0"/><path d="M141.6 129.8h2.400l1.400 1.400v2.400h-3.800z" fill="#fff" stroke="#a8a8a8" stroke-width="0.8"/><path d="M151.7 129.8h2.400l1.400 1.400v2.400h-3.800z" fill="#fff" stroke="#a8a8a8" stroke-width="0.8"/>
<rect x="149.500" y="116.500" width="10" height="11" fill="#fafafa" stroke="#b4b4b4"/><path d="M152 123c-0.500-2.500 1-4 3-4M157 121c0.500 2.500-1 4-3 4" fill="none" stroke="#b8b8b8" stroke-width="1.100"/><path d="M154.200 117.500l2 1.500-2 1.500zM154.800 123.500l-2 1.500 2 1.500z" fill="#b8b8b8"/>
<rect x="167" y="113" width="1" height="22" fill="#8c8c8c"/>
<path d="M178.500 132.500v-18h11l5 5v13" fill="url(#gd)" stroke="#d8d8d8"/><path d="M189.500 114.500v5h5z" fill="#fff" stroke="#c8c8c8"/><path d="M179 132.500h16M194.500 121v12" stroke="#c8c8c8" stroke-dasharray="1 1" fill="none"/>
<path d="M210.5 123.5V116.5L212 114.5H214L215.5 116.5H220.5V123.5Z" fill="url(#gfg)"/><path d="M210.5 123.5V116.5L212 114.5H214L215.5 116.5H220.5" fill="none" stroke="#c0c0c0"/><path d="M210.5 123.5H220.5V116.5" fill="none" stroke="#b4b4b4"/>
<rect x="206.500" y="121.500" width="9" height="11" fill="#fcfcfc" stroke="#c4c4c4"/><path d="M206.500 132.500h9.500" stroke="#a8a8a8"/>
<path d="M213 125.500l5.500-6.500M221.500 125.500l4.500-6 0.800 2" fill="none" stroke="#b0b0b0" stroke-width="0.9"/><circle cx="214.500" cy="126" r="1.900" fill="#fff" stroke="#a8a8a8" stroke-width="1"/><circle cx="220.500" cy="126" r="1.900" fill="#fff" stroke="#a8a8a8" stroke-width="1"/><path d="M216.400 125.500h2.200" stroke="#a8a8a8"/>
<rect x="233" y="113" width="1" height="22" fill="#8c8c8c"/>
<path d="M246.5 123.5V116.5L248 114.5H250L251.5 116.5H256.5V123.5Z" fill="url(#gfg)"/><path d="M246.5 123.5V116.5L248 114.5H250L251.5 116.5H256.5" fill="none" stroke="#c0c0c0"/><path d="M246.5 123.5H256.5V116.5" fill="none" stroke="#b4b4b4"/>
<rect x="243.500" y="122.500" width="9" height="10" fill="#fcfcfc" stroke="#c8c8c8"/><path d="M243.500 132.500h9.500" stroke="#a8a8a8"/>
<path d="M250.500 126.500h8v-3.500l5 4.700-5 4.700v-3.500h-8z" fill="#f8f8f8" stroke="#b8b8b8" stroke-width="0.9"/>
<path d="M281.5 123.5V116.5L283 114.5H285L286.5 116.5H291.5V123.5Z" fill="url(#gfg)"/><path d="M281.5 123.5V116.5L283 114.5H285L286.5 116.5H291.5" fill="none" stroke="#c0c0c0"/><path d="M281.5 123.5H291.5V116.5" fill="none" stroke="#b4b4b4"/>
<rect x="279.500" y="122.500" width="9" height="10" fill="#fcfcfc" stroke="#c8c8c8"/><path d="M279.500 132.500h9.500" stroke="#a8a8a8"/>
<path d="M284.500 126.500h-8v-3.500l-5 4.700 5 4.700v-3.500h8z" fill="#f8f8f8" stroke="#b8b8b8" stroke-width="0.9"/>
<path d="M302.800 115.600L311.400 122.200L304 131.500" stroke="#b8b8b8" stroke-width="2.300" fill="none" stroke-linejoin="bevel"/>
<path d="M311.400 122.200L318.600 116.300M311.400 122.200L319 131" stroke="#b0b0b0" stroke-width="1" fill="none"/>
<rect x="328" y="113" width="1" height="22" fill="#8c8c8c"/>
<circle cx="347.400" cy="123.400" r="9.200" fill="url(#gclock)" stroke="#bcbcbc" stroke-width="1"/><path d="M347.400 118.300v5.300h5.200" fill="none" stroke="#bcbcbc" stroke-width="1.300"/><path d="M347.400 116v0.900M347.400 130.200v0.900M340 123.400h0.900M354 123.400h0.900" stroke="#a8a8a8" stroke-width="1"/>
</svg>


</div>
<div class="pathf" style="left:8px;width:714px"><div class="t" style="left:4px;top:3px;transform:scaleX(0.9827);">D:\vxbd\eu\29\shared\projects\IFC_COMPARE\Duplex_A_20110907.ifc.xml</div><div class="pbtn" style="right:16px;width:14px"><span class="dots">...</span></div><div class="pbtn" style="right:2px;width:10px"><svg width="10" height="15" viewBox="0 0 10 15"><path d="M1.500 5.500h7l-3.500 4z" fill="#000"/></svg></div></div>
<div class="pathf" style="left:769px;width:678px"><div class="t" style="left:4px;top:3px;transform:scaleX(0.9736);">D:\vxbd\eu\29\shared\projects\IFC_COMPARE\Duplex_A_20110907_versio2.ifc.xml</div><div class="pbtn" style="right:16px;width:14px"><span class="dots">...</span></div><div class="pbtn" style="right:2px;width:10px"><svg width="10" height="15" viewBox="0 0 10 15"><path d="M1.500 5.500h7l-3.500 4z" fill="#000"/></svg></div></div>
<svg class="abs" style="left:740px;top:168px" width="14" height="10" viewBox="0 0 14 10"><path d="M5 1v7l-4-3.500zM8 1v7l4-3.500z" fill="#000"/></svg>
<div class="mk b" style="left:2px;top:195px"></div>
<div class="mk b" style="left:2px;top:279px"></div>
<div class="mk b" style="left:1450px;top:195px"></div>
<div class="mk b" style="left:1450px;top:279px"></div>
<div class="mk g" style="left:2px;top:329px;height:2px"></div>
<div class="mk g2" style="left:1450px;top:330px;height:1px"></div>
<div class="pane" id="lp" style="left:9px;width:713px">
<div class="vs" style="left:2px"><div class="abs" style="left:0;top:0"><svg width="16" height="16" viewBox="0 0 16 16"><path d="M4.700 10.300L8 6.700L11.300 10.300" stroke="#5a5a5a" stroke-width="1.900" fill="none"/></svg></div><div class="thumb" style="left:0;top:147px;width:15px;height:17px"></div><div class="abs" style="left:0;top:615px"><svg width="16" height="16" viewBox="0 0 16 16"><path d="M4.700 6.300L8 9.900L11.300 6.300" stroke="#5a5a5a" stroke-width="1.900" fill="none"/></svg></div><div class="sbtn" style="top:632px"><svg width="13" height="13" viewBox="0 0 13 13"><path d="M6.500 2.600l2.900 3.700h-5.800zM6.500 6.600l2.900 3.700h-5.800z" fill="#000"/></svg></div><div class="sbtn" style="top:649px"><svg width="13" height="13" viewBox="0 0 13 13"><path d="M3.600 2.700h5.800l-2.900 3.700zM3.600 6.700h5.800l-2.900 3.700z" fill="#000"/></svg></div></div>
<div class="code" style="left:19px;width:692px;top:1px;height:664px"><div class="greenbg"></div><div class="lines">
<div class="ln"><span class="no">5093</span> &lt;PROPERTY NAME="ModelLabel"&gt;ModelLabel&lt;/PROPERTY&gt;</div>
<div class="ln"><span class="no">5094</span> &lt;PROPERTY NAME="ModelReference"&gt;ModelReference&lt;/PROPERTY&gt;</div>
<div class="ln"><span class="no">5095</span> &lt;PROPERTY NAME="NominalHeight"&gt;NominalHeight&lt;/PROPERTY&gt;</div>
<div class="ln"><span class="no">5096</span> &lt;PROPERTY NAME="NominalLength"&gt;NominalLength&lt;/PROPERTY&gt;</div>
<div class="ln"><span class="no">5097</span> &lt;PROPERTY NAME="NominalWidth"&gt;NominalWidth&lt;/PROPERTY&gt;</div>
<div class="ln"><span class="no">5098</span> &lt;PROPERTY NAME="ProductionYear"&gt;ProductionYear&lt;/PROPERTY&gt;</div>
<div class="ln"><span class="no">5099</span> &lt;PROPERTY NAME="Reference"&gt;Reference&lt;/PROPERTY&gt;</div>
<div class="ln"><span class="no">5100</span> &lt;PROPERTY NAME="ReplacementCost"&gt;ReplacementCost&lt;/PROPERTY&gt;</div>
<div class="ln"><span class="no">5101</span> &lt;PROPERTY NAME="Shape"&gt;Shape&lt;/PROPERTY&gt;</div>
<div class="ln"><span class="no">5102</span> &lt;PROPERTY NAME="Size"&gt;Size&lt;/PROPERTY&gt;</div>
<div class="ln"><span class="no">5103</span> &lt;PROPERTY NAME="SustainabilityPerformance"&gt;SustainabilityPerformance&lt;/PROPERTY&gt;</div>
<div class="ln"><span class="no">5104</span> &lt;PROPERTY NAME="WarrantyDescription"&gt;WarrantyDescription&lt;/PROPERTY&gt;</div>
<div class="ln"><span class="no">5105</span> &lt;PROPERTY NAME="WarrantyDurationLabor"&gt;WarrantyDurationLabor&lt;/PROPERTY&gt;</div>
<div class="ln"><span class="no">5106</span> &lt;PROPERTY NAME="WarrantyDurationParts"&gt;WarrantyDurationParts&lt;/PROPERTY&gt;</div>
<div class="ln"><span class="no">5107</span> &lt;PROPERTY NAME="WarrantyGuarantorLabor"&gt;WarrantyGuarantorLabor&lt;/PROPERTY&gt;</div>
<div class="ln"><span class="no">5108</span> &lt;PROPERTY NAME="WarrantyGuarantorParts"&gt;WarrantyGuarantorParts&lt;/PROPERTY&gt;</div>
<div class="ln"><span class="no">5109</span>RTY_SET&gt;</div>
<div class="ln"><span class="no">5110</span>TY_SET NAME="Pset_SlabCommon"&gt;</div>
<div class="ln"><span class="no">5111</span> &lt;PROPERTY NAME="IsExternal"&gt;0&lt;/PROPERTY&gt;</div>
<div class="ln"><span class="no">5112</span> &lt;PROPERTY NAME="LoadBearing"&gt;1&lt;/PROPERTY&gt;</div>
<div class="ln"><span class="no">5113</span> &lt;PROPERTY NAME="Reference"&gt;Floor:150mm Exterior Slab on Grade&lt;/PROPERTY&gt;</div>
<div class="ln"><span class="no">5114</span>RTY_SET&gt;</div>
<div class="ln"><span class="no">5115</span>&gt;</div>
<div class="ln"><span class="no">5116</span></div>
<div class="ln r"><span class="no">5117</span>HETO8tf3SgGEXu" NAME="Floor:150mm Exterior Slab on Grade:216552"&gt;</div>
<div class="ln r"><span class="no">5118</span>EL_NAME="FLOOR0" LABEL="0F" /&gt;</div>
<div class="ln r"><span class="no">5119</span></div>
<div class="ln r"><span class="no">5120</span>ON&gt;</div>
<div class="ln r"><span class="no">5121</span> &lt;X X="1.000000" Y="0.000000" Z="0.000000" /&gt;</div>
<div class="ln r"><span class="no">5122</span> &lt;Y X="0.000000" Y="1.000000" Z="0.000000" /&gt;</div>
<div class="ln r"><span class="no">5123</span> &lt;Z X="0.000000" Y="0.000000" Z="1.000000" /&gt;</div>
<div class="ln r"><span class="no">5124</span> &lt;P X="400.000000" Y="-22182.734000" Z="-137.000000" /&gt;</div>
<div class="ln r"><span class="no">5125</span>ION&gt;</div>
<div class="ln r"><span class="no">5126</span>NG_BOX&gt;</div>
<div class="ln r"><span class="no">5127</span> &lt;X XMIN="400.000000" XMAX="6200.000000" /&gt;</div>
<div class="ln r"><span class="no">5128</span> &lt;Y YMIN="-22182.734000" YMAX="-17800.000000" /&gt;</div>
<div class="ln r"><span class="no">5129</span> &lt;Z ZMIN="-137.000000" ZMAX="13.000000" /&gt;</div>
<div class="ln r"><span class="no">5130</span>ING_BOX&gt;</div>
<div class="ln r"><span class="no">5131</span></div>
<div class="ln r"><span class="no">5132</span></div>
<div class="ln r"><span class="no">5133</span>TY_SET NAME="PSet_Revit_Analytical Model"&gt;</div>
<div class="ln r"><span class="no">5134</span> &lt;PROPERTY NAME="Vertical Projection"&gt;Default&lt;/PROPERTY&gt;</div>
<div class="ln r"><span class="no">5135</span>RTY_SET&gt;</div>
<div class="ln r"><span class="no">5136</span>TY_SET NAME="PSet_Revit_Constraints"&gt;</div>
<div class="ln r"><span class="no">5137</span> &lt;PROPERTY NAME="Height Offset From Level"&gt;0.013&lt;/PROPERTY&gt;</div>
</div><div class="cbtn" style="left:672px;top:355px"><svg width="11" height="11" viewBox="0 0 11 11"><path d="M2 2.500l4 3-4 3zM5.500 2.500l4 3-4 3z" fill="#000"/></svg></div></div>
<div class="hs" style="left:18px;width:694px"><div class="abs" style="left:0;top:0"><svg width="16" height="16" viewBox="0 0 16 16"><path d="M10 4.300L6.300 7.500L10 10.700" stroke="#5a5a5a" stroke-width="1.900" fill="none"/></svg></div><div class="thumb" style="left:179px;top:0;width:254px;height:15px"></div><div class="abs" style="right:0;top:0"><svg width="16" height="16" viewBox="0 0 16 16"><path d="M6 4.300L9.700 7.500L6 10.700" stroke="#5a5a5a" stroke-width="1.900" fill="none"/></svg></div></div>
</div>
<svg class="abs" style="left:724px;top:178px" width="45" height="690" viewBox="0 0 45 690">
<path d="M0 355.500h5M4.500 356v326" stroke="#7e7e7e" fill="none"/>
<path d="M45 355.500h-5M40.500 356v1" stroke="#7e7e7e" fill="none"/>
<path d="M40.500 356L23.500 682" stroke="#8c8c8c" stroke-width="1" fill="none"/>
<path d="M14 333.500h17" stroke="#b0b0b0" stroke-dasharray="1 2" fill="none"/>
</svg>
<div class="pane" id="rp" style="left:769px;width:678px">
<div class="code" style="left:2px;width:657px;top:1px;height:664px"><div class="lines">
<div class="ln"><span class="no">5093</span> &lt;PROPERTY NAME="ModelLabel"&gt;ModelLabel&lt;/PROPERTY&gt;</div>
<div class="ln"><span class="no">5094</span> &lt;PROPERTY NAME="ModelReference"&gt;ModelReference&lt;/PROPERTY&gt;</div>
<div class="ln"><span class="no">5095</span> &lt;PROPERTY NAME="NominalHeight"&gt;NominalHeight&lt;/PROPERTY&gt;</div>
<div class="ln"><span class="no">5096</span> &lt;PROPERTY NAME="NominalLength"&gt;NominalLength&lt;/PROPERTY&gt;</div>
<div class="ln"><span class="no">5097</span> &lt;PROPERTY NAME="NominalWidth"&gt;NominalWidth&lt;/PROPERTY&gt;</div>
<div class="ln"><span class="no">5098</span> &lt;PROPERTY NAME="ProductionYear"&gt;ProductionYear&lt;/PROPERTY&gt;</div>
<div class="ln"><span class="no">5099</span> &lt;PROPERTY NAME="Reference"&gt;Reference&lt;/PROPERTY&gt;</div>
<div class="ln"><span class="no">5100</span> &lt;PROPERTY NAME="ReplacementCost"&gt;ReplacementCost&lt;/PROPERTY&gt;</div>
<div class="ln"><span class="no">5101</span> &lt;PROPERTY NAME="Shape"&gt;Shape&lt;/PROPERTY&gt;</div>
<div class="ln"><span class="no">5102</span> &lt;PROPERTY NAME="Size"&gt;Size&lt;/PROPERTY&gt;</div>
<div class="ln"><span class="no">5103</span> &lt;PROPERTY NAME="SustainabilityPerformance"&gt;SustainabilityPerformance&lt;/PROPERTY&gt;</div>
<div class="ln"><span class="no">5104</span> &lt;PROPERTY NAME="WarrantyDescription"&gt;WarrantyDescription&lt;/PROPERTY&gt;</div>
<div class="ln"><span class="no">5105</span> &lt;PROPERTY NAME="WarrantyDurationLabor"&gt;WarrantyDurationLabor&lt;/PROPERTY&gt;</div>
<div class="ln"><span class="no">5106</span> &lt;PROPERTY NAME="WarrantyDurationParts"&gt;WarrantyDurationParts&lt;/PROPERTY&gt;</div>
<div class="ln"><span class="no">5107</span> &lt;PROPERTY NAME="WarrantyGuarantorLabor"&gt;WarrantyGuarantorLabor&lt;/PROPERTY&gt;</div>
<div class="ln"><span class="no">5108</span> &lt;PROPERTY NAME="WarrantyGuarantorParts"&gt;WarrantyGuarantorParts&lt;/PROPERTY&gt;</div>
<div class="ln"><span class="no">5109</span>RTY_SET&gt;</div>
<div class="ln"><span class="no">5110</span>TY_SET NAME="Pset_SlabCommon"&gt;</div>
<div class="ln"><span class="no">5111</span> &lt;PROPERTY NAME="IsExternal"&gt;0&lt;/PROPERTY&gt;</div>
<div class="ln"><span class="no">5112</span> &lt;PROPERTY NAME="LoadBearing"&gt;1&lt;/PROPERTY&gt;</div>
<div class="ln"><span class="no">5113</span> &lt;PROPERTY NAME="Reference"&gt;Floor:150mm Exterior Slab on Grade&lt;/PROPERTY&gt;</div>
<div class="ln"><span class="no">5114</span>RTY_SET&gt;</div>
<div class="ln"><span class="no">5115</span>&gt;</div>
<div class="ln"><span class="no">5116</span></div>
<div class="ln"><span class="no">5117</span>ID="1aj$VJZFn2TxepZUBcKpee" NAME="Basic Wall:Interior - Partition (92mm Stud):204300"&gt;</div>
<div class="ln"><span class="no">5118</span>EL_NAME="FLOOR0" LABEL="0F" /&gt;</div>
<div class="ln"><span class="no">5119</span></div>
<div class="ln"><span class="no">5120</span>ON&gt;</div>
<div class="ln"><span class="no">5121</span> &lt;X X="0.000000" Y="-1.000000" Z="0.000000" /&gt;</div>
<div class="ln"><span class="no">5122</span> &lt;Y X="1.000000" Y="0.000000" Z="0.000000" /&gt;</div>
<div class="ln"><span class="no">5123</span> &lt;Z X="0.000000" Y="0.000000" Z="1.000000" /&gt;</div>
<div class="ln"><span class="no">5124</span> &lt;P X="1493.400000" Y="-6250.000000" Z="2612.000000" /&gt;</div>
<div class="ln"><span class="no">5125</span>ION&gt;</div>
<div class="ln"><span class="no">5126</span>NG_BOX&gt;</div>
<div class="ln"><span class="no">5127</span> &lt;X XMIN="1431.400000" XMAX="1555.400000" /&gt;</div>
<div class="ln"><span class="no">5128</span> &lt;Y YMIN="-9725.000000" YMAX="-6250.000000" /&gt;</div>
<div class="ln"><span class="no">5129</span> &lt;Z ZMIN="2612.000000" ZMAX="3100.000000" /&gt;</div>
<div class="ln"><span class="no">5130</span>ING_BOX&gt;</div>
<div class="ln"><span class="no">5131</span></div>
<div class="ln"><span class="no">5132</span></div>
<div class="ln"><span class="no">5133</span>TY_SET NAME="PSet_Revit_Constraints"&gt;</div>
<div class="ln"><span class="no">5134</span> &lt;PROPERTY NAME="Base Constraint"&gt;Level 2&lt;/PROPERTY&gt;</div>
<div class="ln"><span class="no">5135</span> &lt;PROPERTY NAME="Base Extension Distance"&gt;0&lt;/PROPERTY&gt;</div>
<div class="ln"><span class="no">5136</span> &lt;PROPERTY NAME="Base Offset"&gt;-0.488&lt;/PROPERTY&gt;</div>
<div class="ln"><span class="no">5137</span> &lt;PROPERTY NAME="Base is Attached"&gt;0&lt;/PROPERTY&gt;</div>
</div><div class="insline"></div><div class="cbtn" style="left:637px;top:348px"><svg width="11" height="11" viewBox="0 0 11 11"><path d="M9 2.500l-4 3 4 3zM5.500 2.500l-4 3 4 3z" fill="#000"/></svg></div></div>
<div class="focus"></div>
<div class="vs" style="left:661px"><div class="abs" style="left:0;top:0"><svg width="16" height="16" viewBox="0 0 16 16"><path d="M4.700 10.300L8 6.700L11.300 10.300" stroke="#5a5a5a" stroke-width="1.900" fill="none"/></svg></div><div class="thumb" style="left:0;top:147px;width:15px;height:17px"></div><div class="abs" style="left:0;top:615px"><svg width="16" height="16" viewBox="0 0 16 16"><path d="M4.700 6.300L8 9.900L11.300 6.300" stroke="#5a5a5a" stroke-width="1.900" fill="none"/></svg></div><div class="sbtn" style="top:632px"><svg width="13" height="13" viewBox="0 0 13 13"><path d="M6.500 2.600l2.900 3.700h-5.800zM6.500 6.600l2.900 3.700h-5.800z" fill="#000"/></svg></div><div class="sbtn" style="top:649px"><svg width="13" height="13" viewBox="0 0 13 13"><path d="M3.600 2.700h5.800l-2.900 3.700zM3.600 6.700h5.800l-2.900 3.700z" fill="#000"/></svg></div></div>
<div class="hs" style="left:0px;width:660px"><div class="abs" style="left:0;top:0"><svg width="16" height="16" viewBox="0 0 16 16"><path d="M10 4.300L6.300 7.500L10 10.700" stroke="#5a5a5a" stroke-width="1.900" fill="none"/></svg></div><div class="thumb" style="left:175px;top:0;width:233px;height:15px"></div><div class="abs" style="right:0;top:0"><svg width="16" height="16" viewBox="0 0 16 16"><path d="M6 4.300L9.700 7.500L6 10.700" stroke="#5a5a5a" stroke-width="1.900" fill="none"/></svg></div></div>
</div>
<div id="status">
<div class="t " style="left:3px;top:3px;transform:scaleX(0.9412);">Press F1 for help</div>
<div class="t " style="left:938px;top:3px;transform:scaleX(0.9790);">Default ANSI code page</div>
<div class="t " style="left:1103px;top:3px;transform:scaleX(0.9582);">1 removal · 0 insertions · 3 changes</div>
<div class="t " style="left:1299px;top:3px;transform:scaleX(0.9264);">Ln 1 of 22708</div>
<div class="t " style="left:1392px;top:3px;transform:scaleX(0.9138);">Col 1</div>
<div class="ssep" style="left:1070px"></div>
<div class="ssep" style="left:1098px"></div>
<div class="ssep" style="left:1294px"></div>
<div class="ssep" style="left:1386px"></div>
<div class="ssep" style="left:1437px"></div>
<svg class="abs" style="left:1446px;top:7px" width="10" height="10" viewBox="0 0 10 10"><g fill="#bfbfbf"><rect x="7" y="1" width="2" height="2"/><rect x="4" y="4" width="2" height="2"/><rect x="7" y="4" width="2" height="2"/><rect x="1" y="7" width="2" height="2"/><rect x="4" y="7" width="2" height="2"/><rect x="7" y="7" width="2" height="2"/></g></svg>
</div>
<div class="frame"></div>
</div>
</body></html>
